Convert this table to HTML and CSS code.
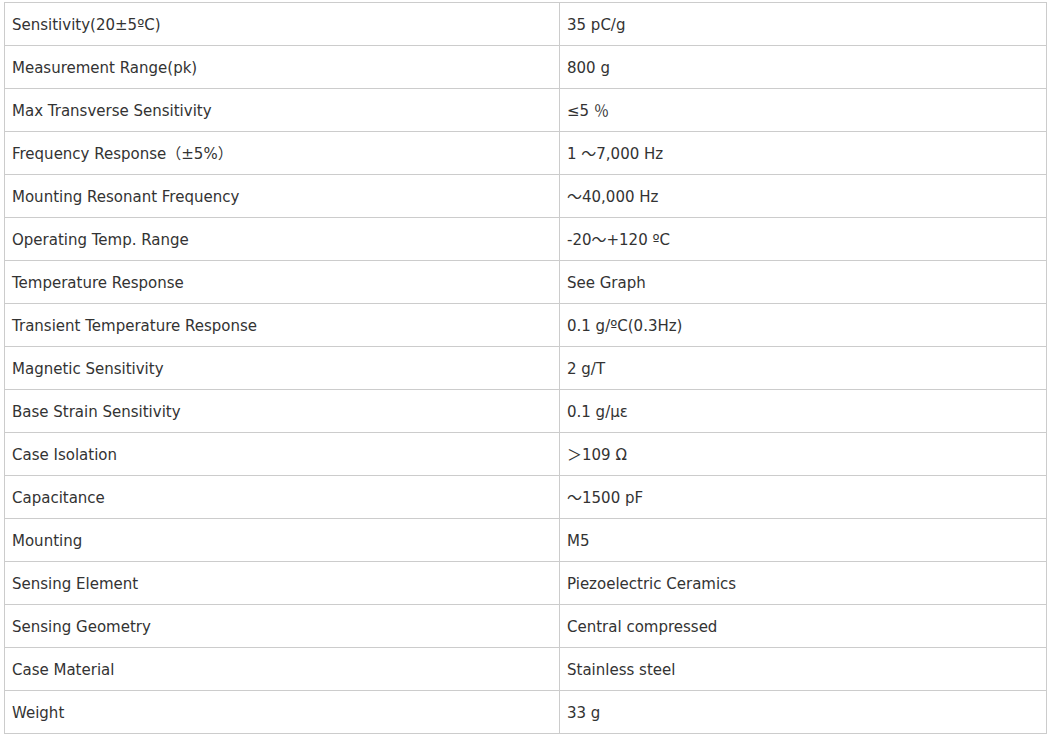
FILE: index.html
```html
<!DOCTYPE html>
<html>
<head>
<meta charset="utf-8">
<link rel="stylesheet" href="styles.css">
</head>
<body>
<table class="spec">
<tbody>
<tr><td class="k">Sensitivity(20±5ºC)</td><td class="v">35 pC/g</td></tr>
<tr><td class="k">Measurement Range(pk)</td><td class="v">800 g</td></tr>
<tr><td class="k">Max Transverse Sensitivity</td><td class="v">≤5 ％</td></tr>
<tr><td class="k">Frequency Response（±5%）</td><td class="v">1 ～7,000 Hz</td></tr>
<tr><td class="k">Mounting Resonant Frequency</td><td class="v">～40,000 Hz</td></tr>
<tr><td class="k">Operating Temp. Range</td><td class="v">-20～+120 ºC</td></tr>
<tr><td class="k">Temperature Response</td><td class="v">See Graph</td></tr>
<tr><td class="k">Transient Temperature Response</td><td class="v">0.1 g/ºC(0.3Hz)</td></tr>
<tr><td class="k">Magnetic Sensitivity</td><td class="v">2 g/T</td></tr>
<tr><td class="k">Base Strain Sensitivity</td><td class="v">0.1 g/με</td></tr>
<tr><td class="k">Case Isolation</td><td class="v">＞109 Ω</td></tr>
<tr><td class="k">Capacitance</td><td class="v">～1500 pF</td></tr>
<tr><td class="k">Mounting</td><td class="v">M5</td></tr>
<tr><td class="k">Sensing Element</td><td class="v">Piezoelectric Ceramics</td></tr>
<tr><td class="k">Sensing Geometry</td><td class="v">Central compressed</td></tr>
<tr><td class="k">Case Material</td><td class="v">Stainless steel</td></tr>
<tr><td class="k">Weight</td><td class="v">33 g</td></tr>
</tbody>
</table>
</body>
</html>
```
FILE: styles.css
```css
html, body {
  margin: 0;
  padding: 0;
  background: #ffffff;
}
body {
  padding: 2px 0 0 4px;
  font-family: "DejaVu Sans", "Noto Sans CJK SC", Verdana, sans-serif;
  font-size: 15px;
  color: #333333;
}
.spec {
  border-collapse: collapse;
  width: 1043px;
  table-layout: fixed;
}
.spec td {
  border: 1px solid #cccccc;
  height: 43px;
  padding: 1px 7px 0;
  box-sizing: border-box;
  vertical-align: middle;
  line-height: 20px;
}
.spec td.k {
  width: 555px;
}
```
